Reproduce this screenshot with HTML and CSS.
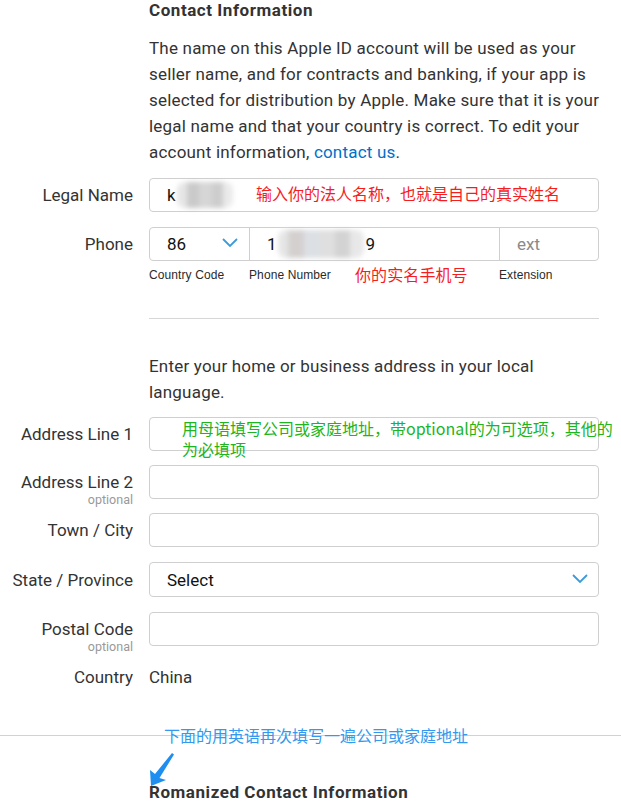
FILE: index.html
```html
<!DOCTYPE html>
<html>
<head>
<meta charset="utf-8">
<link rel="stylesheet" href="styles.css">
</head>
<body>
<div class="page">
  <h2 class="title block">Contact Information</h2>
  <p class="intro block">The name on this Apple ID account will be used as your seller name, and for contracts and banking, if your app is selected for distribution by Apple. Make sure that it is your legal name and that your country is correct. To edit your account information, <a class="link" href="#">contact us</a>.</p>

  <div class="row row-legal">
    <div class="label">Legal Name</div>
    <div class="field">
      <div class="box"><span class="val">k</span><span class="blur blur-name"></span></div>
      <span class="note note-red note-legal">输入你的法人名称，也就是自己的真实姓名</span>
    </div>
  </div>

  <div class="row row-phone">
    <div class="label">Phone</div>
    <div class="field">
      <div class="phone">
        <div class="seg seg-cc"><span class="val">86</span>
          <svg class="chev" width="16" height="9" viewBox="0 0 16 9"><polyline points="1,1 8,8 15,1" fill="none" stroke="#3b9bdb" stroke-width="1.8"/></svg>
        </div>
        <div class="seg seg-num"><span class="val">1</span><span class="blur blur-phone"></span><span class="val">9</span></div>
        <div class="seg seg-ext"><span class="ph">ext</span></div>
      </div>
    </div>
  </div>

  <div class="sublabels block">
    <span class="sub sub-cc">Country Code</span>
    <span class="sub sub-num">Phone Number</span>
    <span class="sub sub-ext">Extension</span>
    <span class="note note-red note-phone">你的实名手机号</span>
  </div>

  <hr class="divider block">

  <p class="intro2 block">Enter your home or business address in your local language.</p>

  <div class="row row-a1">
    <div class="label">Address Line 1</div>
    <div class="field">
      <div class="box"></div>
      <span class="note note-green">用母语填写公司或家庭地址，带optional的为可选项，其他的为必填项</span>
    </div>
  </div>

  <div class="row row-gap">
    <div class="label">Address Line 2<span class="opt">optional</span></div>
    <div class="field"><div class="box"></div></div>
  </div>

  <div class="row row-gap">
    <div class="label">Town / City</div>
    <div class="field"><div class="box"></div></div>
  </div>

  <div class="row row-gap15">
    <div class="label">State / Province</div>
    <div class="field">
      <div class="box box-select"><span class="val">Select</span>
        <svg class="chev" width="16" height="9" viewBox="0 0 16 9"><polyline points="1,1 8,8 15,1" fill="none" stroke="#3b9bdb" stroke-width="1.8"/></svg>
      </div>
    </div>
  </div>

  <div class="row row-gap15">
    <div class="label">Postal Code<span class="opt">optional</span></div>
    <div class="field"><div class="box"></div></div>
  </div>

  <div class="row row-country">
    <div class="label label-text">Country</div>
    <div class="field"><span class="country">China</span></div>
  </div>

  <div class="full-divider">
    <span class="note note-blue">下面的用英语再次填写一遍公司或家庭地址</span>
    <svg class="arrow" width="34" height="42" viewBox="0 0 34 42"><polygon points="6,37 5,21 10,25 27,4 29,5.5 14.5,29 21,31" fill="#1e8ff0"/></svg>
  </div>

  <h2 class="title block title-rom">Romanized Contact Information</h2>
</div>
</body>
</html>
```

FILE: styles.css
```css
html, body {
  margin: 0;
  padding: 0;
  background: #fff;
  overflow: hidden;
}
body {
  font-family: Roboto, "Noto Sans", sans-serif;
  color: #333;
  font-size: 17px;
}
.page {
  position: relative;
  width: 621px;
}
.block {
  margin-left: 149px;
  width: 450px;
}
.title {
  font-size: 17px;
  font-weight: 700;
  line-height: 20px;
  letter-spacing: 0.55px;
  margin-top: 0;
  margin-bottom: 0;
  color: #333;
}
.intro {
  margin: 15px 0 0 149px;
  width: 460px;
  line-height: 26px;
  letter-spacing: 0.2px;
}
.link {
  color: #0070c9;
  text-decoration: none;
}
.row {
  display: grid;
  grid-template-columns: 133px 450px;
  column-gap: 16px;
  align-items: center;
}
.row-legal { margin-top: 13px; }
.row-phone { margin-top: 15px; }
.row-a1 { margin-top: 12px; }
.row-gap { margin-top: 14px; }
.row-gap15 { margin-top: 15px; }
.row-country { margin-top: 18px; }
.label {
  text-align: right;
  line-height: 34px;
  color: #333;
}
.label-text { line-height: 26px; }
.opt {
  display: block;
  font-size: 12.5px;
  line-height: 14px;
  color: #999;
  margin-top: -6px;
  margin-bottom: -8px;
}
.field {
  position: relative;
}
.box {
  box-sizing: border-box;
  height: 34px;
  border: 1px solid #cfcfcf;
  border-radius: 4px;
  padding: 0 17px;
  display: flex;
  align-items: center;
}
.box-select {
  height: 35px;
  justify-content: space-between;
  padding-right: 10px;
}
.val {
  color: #111;
}
.ph {
  color: #8a8a8a;
}
.blur {
  display: inline-block;
  filter: blur(2.5px);
  background: linear-gradient(to right, #e6e6e6 0, #e6e6e6 18%, #cacaca 18%, #cacaca 40%, #d6d6d6 40%, #d6d6d6 62%, #cdcdcd 62%, #cdcdcd 82%, #eaeaea 82%);
  border-radius: 8px;
}
.blur-name {
  width: 56px;
  height: 26px;
  margin-left: 1px;
}
.blur-phone {
  width: 86px;
  height: 28px;
  margin-left: 1px;
  margin-right: 2px;
  background: linear-gradient(to right, #e6e6e6 0, #e6e6e6 12%, #d4d0d0 12%, #d4d0d0 30%, #dce0e4 30%, #dce0e4 48%, #dfdfdf 48%, #dfdfdf 66%, #d3d3d3 66%, #d3d3d3 84%, #e8e8e8 84%);
}
.phone {
  box-sizing: border-box;
  height: 34px;
  border: 1px solid #cfcfcf;
  border-radius: 4px;
  display: grid;
  grid-template-columns: 99px 250px 1fr;
}
.seg {
  display: flex;
  align-items: center;
  padding: 0 17px;
  border-left: 1px solid #cfcfcf;
}
.seg-cc {
  border-left: 0;
  justify-content: space-between;
  padding-right: 11px;
}
.chev {
  display: block;
  margin-top: -3px;
}
.sublabels {
  position: relative;
  margin-top: 6px;
  display: grid;
  grid-template-columns: 100px 250px 100px;
  font-family: "Liberation Sans", Arial, sans-serif;
  font-size: 12px;
  line-height: 16px;
  letter-spacing: 0.1px;
  color: #2a2a2a;
}
.divider {
  border: 0;
  border-top: 1px solid #d6d6d6;
  margin-top: 35px;
  margin-bottom: 0;
  height: 0;
}
.intro2 {
  margin-top: 34px;
  margin-bottom: 0;
  line-height: 26px;
  letter-spacing: 0.2px;
}
.country {
  line-height: 26px;
  color: #333;
}
.full-divider {
  position: relative;
  border-top: 1px solid #d2d2d2;
  margin-top: 45px;
  height: 0;
}
.title-rom {
  margin-top: 46px;
}
.note {
  position: absolute;
  font-family: "Noto Sans CJK SC", "Noto Sans", sans-serif;
  font-size: 16px;
  line-height: 21px;
  white-space: nowrap;
}
.note-red { color: #f51d1d; }
.note-legal {
  left: 107px;
  top: 5px;
}
.note-phone {
  left: 206px;
  top: -3px;
}
.note-green {
  color: #20b520;
  white-space: normal;
  width: 436px;
  left: 33px;
  top: 1px;
}
.note-blue {
  color: #3399ee;
  left: 164px;
  top: -11px;
  line-height: 21px;
}
.arrow {
  position: absolute;
  left: 145px;
  top: 13px;
}
```
